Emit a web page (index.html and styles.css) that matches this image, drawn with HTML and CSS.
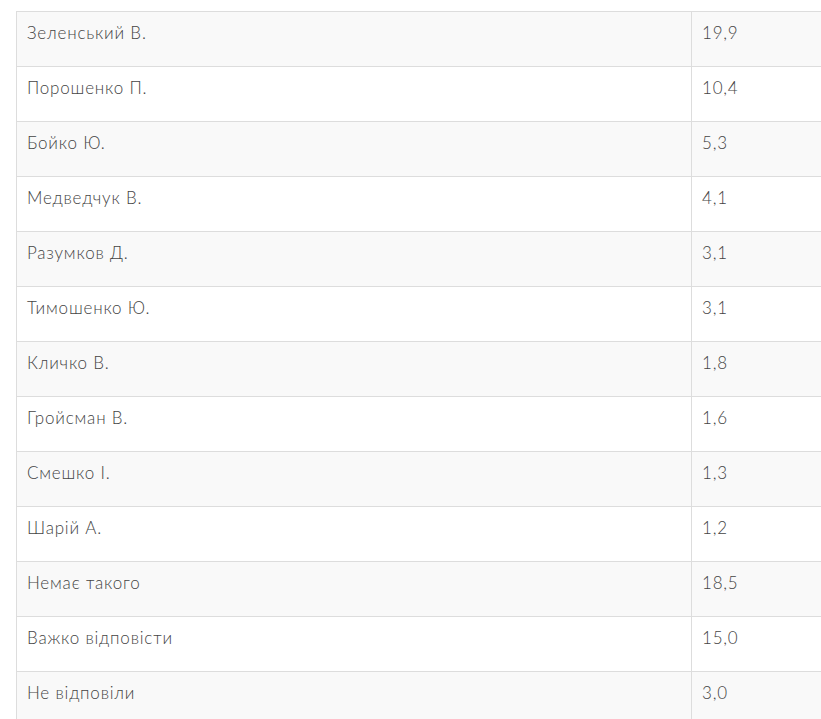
FILE: index.html
```html
<!DOCTYPE html>
<html lang="uk">
<head>
<meta charset="utf-8">
<link rel="stylesheet" href="styles.css">
</head>
<body>
<div class="wrap">
<table class="poll">
<tbody>
<tr><td class="name">Зеленський В.</td><td class="val">19,9</td></tr>
<tr><td class="name">Порошенко П.</td><td class="val">10,4</td></tr>
<tr><td class="name">Бойко Ю.</td><td class="val">5,3</td></tr>
<tr><td class="name">Медведчук В.</td><td class="val">4,1</td></tr>
<tr><td class="name">Разумков Д.</td><td class="val">3,1</td></tr>
<tr><td class="name">Тимошенко Ю.</td><td class="val">3,1</td></tr>
<tr><td class="name">Кличко В.</td><td class="val">1,8</td></tr>
<tr><td class="name">Гройсман В.</td><td class="val">1,6</td></tr>
<tr><td class="name">Смешко І.</td><td class="val">1,3</td></tr>
<tr><td class="name">Шарій А.</td><td class="val">1,2</td></tr>
<tr><td class="name">Немає такого</td><td class="val">18,5</td></tr>
<tr><td class="name">Важко відповісти</td><td class="val">15,0</td></tr>
<tr><td class="name">Не відповіли</td><td class="val">3,0</td></tr>
</tbody>
</table>
</div>
</body>
</html>
```
FILE: styles.css
```css
html, body {
  margin: 0;
  padding: 0;
  background: #fff;
  overflow: hidden;
}
.wrap {
  padding: 11px 0 0 16px;
}
.poll {
  border-collapse: collapse;
  width: 900px;
  font-family: "Lato", "Open Sans", sans-serif;
  font-size: 17px;
  font-weight: 300;
  letter-spacing: 0.8px;
  color: #444;
}
.poll td {
  border: 1px solid #ddd;
  padding: 9px 10px 21px;
  line-height: 24px;
  vertical-align: top;
  text-align: left;
}
.poll tr:nth-child(odd) td {
  background: #f9f9f9;
}
.poll td.name {
  width: 654px;
}
```
